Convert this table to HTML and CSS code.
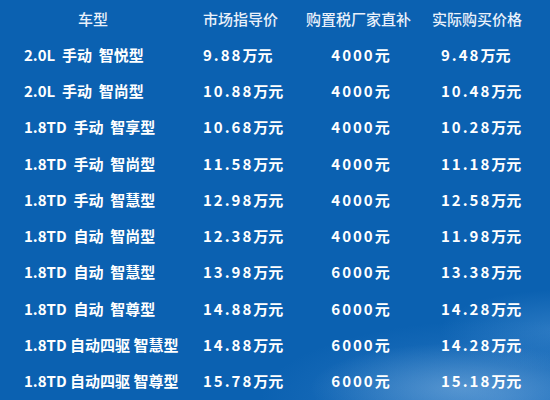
FILE: index.html
```html
<!DOCTYPE html>
<html lang="zh-CN">
<head>
<meta charset="utf-8">
<title>车型价格表</title>
<link rel="stylesheet" href="styles.css">
</head>
<body>
<div class="sheet">
  <div class="price-table">
    <div class="cell head c1">车型</div>
    <div class="cell head c2">市场指导价</div>
    <div class="cell head c3">购置税厂家直补</div>
    <div class="cell head c4">实际购买价格</div>

    <div class="cell c1">2.0L&nbsp; 手动&nbsp; 智悦型</div>
    <div class="cell c2"><span class="num">9.88</span>万元</div>
    <div class="cell c3"><span class="num">4000</span>元</div>
    <div class="cell c4"><span class="num">9.48</span>万元</div>

    <div class="cell c1">2.0L&nbsp; 手动&nbsp; 智尚型</div>
    <div class="cell c2"><span class="num">10.88</span>万元</div>
    <div class="cell c3"><span class="num">4000</span>元</div>
    <div class="cell c4"><span class="num">10.48</span>万元</div>

    <div class="cell c1">1.8TD&nbsp; 手动&nbsp; 智享型</div>
    <div class="cell c2"><span class="num">10.68</span>万元</div>
    <div class="cell c3"><span class="num">4000</span>元</div>
    <div class="cell c4"><span class="num">10.28</span>万元</div>

    <div class="cell c1">1.8TD&nbsp; 手动&nbsp; 智尚型</div>
    <div class="cell c2"><span class="num">11.58</span>万元</div>
    <div class="cell c3"><span class="num">4000</span>元</div>
    <div class="cell c4"><span class="num">11.18</span>万元</div>

    <div class="cell c1">1.8TD&nbsp; 手动&nbsp; 智慧型</div>
    <div class="cell c2"><span class="num">12.98</span>万元</div>
    <div class="cell c3"><span class="num">4000</span>元</div>
    <div class="cell c4"><span class="num">12.58</span>万元</div>

    <div class="cell c1">1.8TD&nbsp; 自动&nbsp; 智尚型</div>
    <div class="cell c2"><span class="num">12.38</span>万元</div>
    <div class="cell c3"><span class="num">4000</span>元</div>
    <div class="cell c4"><span class="num">11.98</span>万元</div>

    <div class="cell c1">1.8TD&nbsp; 自动&nbsp; 智慧型</div>
    <div class="cell c2"><span class="num">13.98</span>万元</div>
    <div class="cell c3"><span class="num">6000</span>元</div>
    <div class="cell c4"><span class="num">13.38</span>万元</div>

    <div class="cell c1">1.8TD&nbsp; 自动&nbsp; 智尊型</div>
    <div class="cell c2"><span class="num">14.88</span>万元</div>
    <div class="cell c3"><span class="num">6000</span>元</div>
    <div class="cell c4"><span class="num">14.28</span>万元</div>

    <div class="cell c1">1.8TD 自动四驱 智慧型</div>
    <div class="cell c2"><span class="num">14.88</span>万元</div>
    <div class="cell c3"><span class="num">6000</span>元</div>
    <div class="cell c4"><span class="num">14.28</span>万元</div>

    <div class="cell c1">1.8TD 自动四驱 智尊型</div>
    <div class="cell c2"><span class="num">15.78</span>万元</div>
    <div class="cell c3"><span class="num">6000</span>元</div>
    <div class="cell c4"><span class="num">15.18</span>万元</div>
  </div>
</div>
</body>
</html>
```

FILE: styles.css
```css
html, body {
  margin: 0;
  padding: 0;
}

body {
  width: 550px;
  height: 400px;
  overflow: hidden;
  background-color: #0b61b1;
  font-family: "Noto Sans CJK SC", "Noto Sans", sans-serif;
  color: #ffffff;
}

.sheet {
  width: 550px;
  height: 400px;
  box-sizing: border-box;
  padding: 0.5px 0 0 24px;
  background:
    radial-gradient(ellipse 150px 45px at 460px 388px, rgba(190, 220, 245, 0.32), rgba(190, 220, 245, 0) 100%),
    radial-gradient(ellipse 240px 80px at 500px 400px, rgba(70, 140, 210, 0.55), rgba(70, 140, 210, 0) 100%),
    radial-gradient(ellipse 120px 40px at 560px 330px, rgba(80, 150, 215, 0.45), rgba(80, 150, 215, 0) 100%),
    #0b61b1;
}

.price-table {
  display: grid;
  grid-template-columns: 179px 100px 115px 1fr;
  grid-auto-rows: 36.25px;
  align-items: center;
}

.cell {
  font-size: 15px;
  font-weight: 700;
  line-height: 20px;
  white-space: nowrap;
}

.head {
  font-weight: 500;
  color: #e9f0fa;
}

.head.c1 {
  padding-left: 54px;
}

.head.c4 {
  padding-left: 14px;
}

.c3 {
  text-align: center;
}

.c4 {
  padding-left: 23px;
}

.head.c3 {
  text-align: center;
  padding-right: 4px;
}

.num {
  letter-spacing: 2px;
}
```
